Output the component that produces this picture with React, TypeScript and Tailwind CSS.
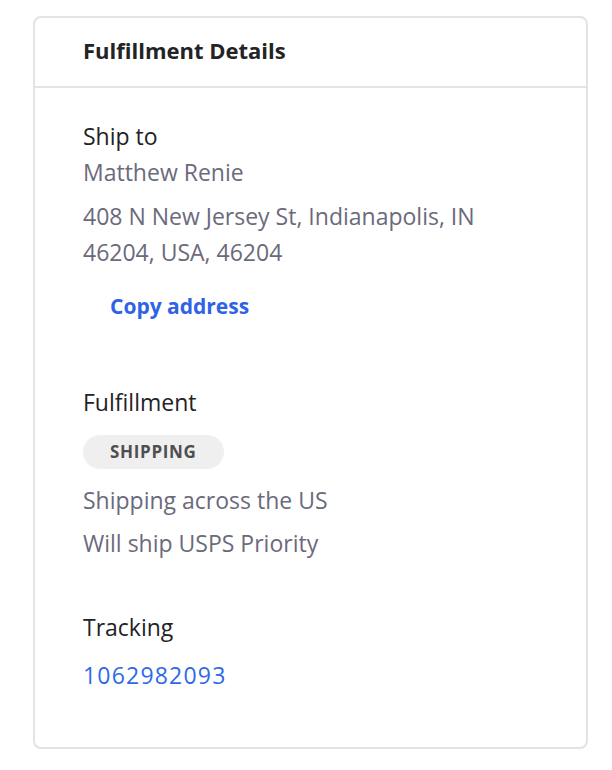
export default function App() {
  return (
    <div className="w-[612px] h-[770px] bg-white pt-4 pl-[33px]" style={{ fontFamily: "'Open Sans', 'Noto Sans', sans-serif" }}>
      <div className="w-[555px] h-[733px] rounded-lg border-2 border-[#e3e3e5] flex flex-col">
        <div className="h-[70px] border-b-2 border-[#e3e3e5] flex items-center pl-12 pb-[5px]">
          <h2 className="text-[22px] leading-[34px] font-bold text-[#232326]">Fulfillment Details</h2>
        </div>
        <div className="pl-12 pr-10 pt-[31px] flex flex-col">
          <div className="text-[23px] leading-[34px] text-[#232326]">Ship to</div>
          <div className="text-[23px] leading-[36px] text-[#6b6a7b] mt-[1px]">Matthew Renie</div>
          <div className="text-[23px] leading-[36px] text-[#6b6a7b] mt-2 w-[430px]">408 N New Jersey St, Indianapolis, IN 46204, USA, 46204</div>
          <div className="mt-[18px] ml-[27px] text-[21px] leading-[36px] font-bold text-[#2f62e6]">Copy address</div>
          <div className="mt-[61px] text-[23px] leading-[34px] text-[#232326]">Fulfillment</div>
          <div className="mt-[16px] self-start h-[34px] px-[27px] rounded-full bg-[#efefef] flex items-center text-[17px] font-bold tracking-[0.04em] text-[#4e4e52]">SHIPPING</div>
          <div className="mt-[13px] text-[23px] leading-[36px] text-[#6b6a7b]">Shipping across the US</div>
          <div className="mt-[7px] text-[23px] leading-[36px] text-[#6b6a7b]">Will ship USPS Priority</div>
          <div className="mt-[49px] text-[23px] leading-[34px] text-[#232326]">Tracking</div>
          <div className="mt-[13px] text-[23px] leading-[36px] tracking-[1.2px] text-[#2f6ae6]">1062982093</div>
        </div>
      </div>
    </div>
  );
}
